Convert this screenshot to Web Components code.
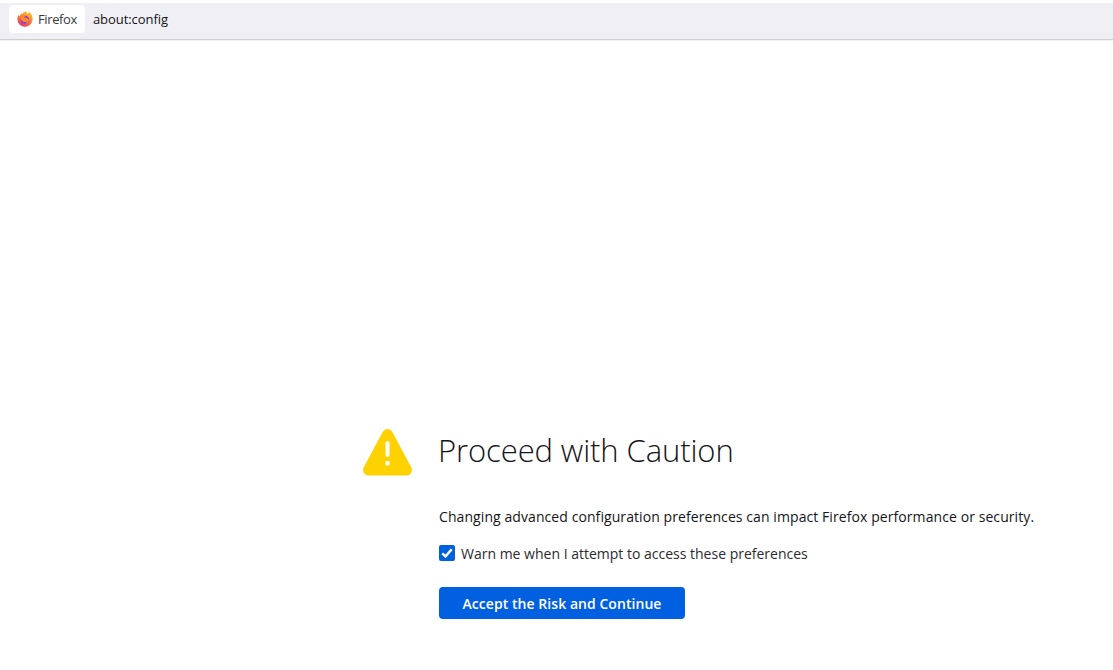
<!DOCTYPE html>
<html>
<head>
<meta charset="utf-8">
<title>about:config</title>
<style>
    html, body { margin: 0; height: 100%; background: #fff; }
    body { font-family: "Open Sans", "Noto Sans", sans-serif; color: #15141a; overflow: hidden; }
</style>
</head>
<body>
<browser-toolbar url="about:config">Firefox</browser-toolbar>
<caution-page>
    <span slot="title">Proceed with Caution</span>
    <span slot="message">Changing advanced configuration preferences can impact Firefox performance or security.</span>
    <warn-checkbox>Warn me when I attempt to access these preferences</warn-checkbox>
    <accept-button>Accept the Risk and Continue</accept-button>
</caution-page>

<script>
/**
 * Toolbar with the identity box and the address
 */
class BrowserToolbar extends HTMLElement {
    constructor(){
        super();
        this.attachShadow({mode: 'open'});
        this.shadowRoot.innerHTML = `
<style>
    :host {
        display: block;
        padding-top: 3px;
        height: 36px;
        box-sizing: content-box;
        border-bottom: 1px solid #cfcfd2;
        box-shadow: 0 1px 0 #f0f0f0;
    }
    .bar {
        display: flex;
        align-items: flex-start;
        height: 36px;
        padding-left: 9px;
        background: #f0f0f4;
    }
    .identity {
        display: flex;
        align-items: center;
        gap: 5px;
        height: 28px;
        margin-top: 2px;
        padding: 0 8px;
        background: #fff;
        border-radius: 4px;
        font-size: 13px;
        letter-spacing: -0.38px;
        color: #3a3a40;
    }
    .address {
        margin: 2px 0 0 8px;
        line-height: 28px;
        font-size: 13px;
        letter-spacing: -0.06px;
        color: #15141a;
    }
    svg { width: 16px; height: 16px; display: block; }
</style>
<div class="bar">
    <div class="identity">
        <svg viewBox="0 0 16 16">
            <defs>
                <linearGradient id="fx" x1="0.85" y1="0" x2="0.3" y2="1">
                    <stop offset="0" stop-color="#ffc92e"/>
                    <stop offset="0.45" stop-color="#ff8a2a"/>
                    <stop offset="1" stop-color="#e8325f"/>
                </linearGradient>
            </defs>
            <path fill="url(#fx)" d="M8 15.8A7.6 7.6 0 0 1 .4 8C.4 6.400 1 5 1.800 3.800c.1.700.4 1.200.8 1.400C3.100 3.800 4.200 2.800 5.500 2.500 6.300 1.400 7.800.6 9.900.2 9.300 1.300 9.600 2.300 10.500 3 11.200 2.600 11.700 1.800 11.800.8 14.200 2.300 15.600 5 15.600 8A7.600 7.800 0 0 1 8 15.800Z"/>
            <circle cx="8" cy="9" r="4.300" fill="#8a3fd8"/>
            <path fill="#ff8a2a" d="M3.600 6.400C5.200 4.900 7 4.700 8.800 5.300 7.800 5.500 7.100 6 7 6.600 8.800 6.200 11 7 12 9.200 11.400 12 9.200 13.600 7 13.400 8.600 13 9.800 11.800 9.700 10.500 8.700 11.300 6.100 11.200 5 9.700 4.300 8.800 3.700 7.600 3.600 6.400Z"/>
        </svg>
        <slot></slot>
    </div>
    <div class="address"></div>
</div>`;
    }

    connectedCallback(){
        this.shadowRoot.querySelector('.address').textContent = this.getAttribute('url');
    }
}

/**
 * Warning icon, heading and the content column
 */
class CautionPage extends HTMLElement {
    constructor(){
        super();
        this.attachShadow({mode: 'open'});
        this.shadowRoot.innerHTML = `
<style>
    :host {
        display: flex;
        justify-content: flex-start;
        padding: 388px 0 0 363px;
    }
    .icon { width: 50px; height: 48px; margin-right: 26px; flex: none; }
    .icon svg { display: block; width: 50px; height: 48px; }
    .content { display: flex; flex-direction: column; align-items: flex-start; }
    h1 {
        margin: 0 0 0 -1px;
        height: 44px;
        line-height: 44px;
        font-size: 31px;
        font-weight: 300;
        letter-spacing: -0.1px;
        color: #15141a;
        white-space: nowrap;
    }
    p {
        margin: 34px 0 0;
        line-height: 22px;
        font-size: 14px;
        letter-spacing: 0.08px;
        white-space: nowrap;
    }
</style>
<div class="icon">
    <svg viewBox="0 0 50 48">
        <path fill="#fed200" stroke="#fed200" stroke-width="11" stroke-linejoin="round" d="M24.500 6.500 L5.500 42 H43.500 Z"/>
        <rect x="22.500" y="13" width="4" height="16" rx="2" fill="#fff"/>
        <rect x="22.500" y="33" width="4" height="4.500" rx="1" fill="#fff"/>
    </svg>
</div>
<div class="content">
    <h1><slot name="title"></slot></h1>
    <p><slot name="message"></slot></p>
    <slot></slot>
</div>`;
    }
}

class WarnCheckbox extends HTMLElement {
    constructor(){
        super();
        this.attachShadow({mode: 'open'});
        this.shadowRoot.innerHTML = `
<style>
    :host {
        display: flex;
        align-items: center;
        gap: 6px;
        margin-top: 14px;
        height: 22px;
        font-size: 14px;
        color: #2b2a33;
        white-space: nowrap;
    }
    .box {
        width: 16px;
        height: 16px;
        border-radius: 2px;
        background: #0060df;
        flex: none;
    }
    svg { display: block; width: 16px; height: 16px; }
</style>
<span class="box">
    <svg viewBox="0 0 16 16"><path d="M3.300 8.300 L6.500 11.500 L12.700 4.300" fill="none" stroke="#fff" stroke-width="2.500"/></svg>
</span>
<slot></slot>`;
    }
}

class AcceptButton extends HTMLElement {
    constructor(){
        super();
        this.attachShadow({mode: 'open'});
        this.shadowRoot.innerHTML = `
<style>
    :host {
        display: flex;
        align-items: center;
        justify-content: center;
        margin-top: 23px;
        width: 246px;
        height: 32px;
        border-radius: 4px;
        background: #0060df;
        color: #fff;
        font-size: 14px;
        font-weight: 600;
        letter-spacing: 0.05px;
        white-space: nowrap;
    }
</style>
<slot></slot>`;
    }
}

window.customElements.define('browser-toolbar', BrowserToolbar);
window.customElements.define('caution-page', CautionPage);
window.customElements.define('warn-checkbox', WarnCheckbox);
window.customElements.define('accept-button', AcceptButton);
</script>
</body>
</html>
